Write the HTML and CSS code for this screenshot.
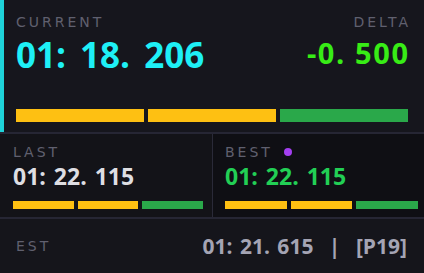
FILE: index.html
```html
<!DOCTYPE html>
<html lang="en">
<head>
  <meta charset="UTF-8">
  <title>Lap Timer</title>
  <link rel="stylesheet" href="styles.css">
</head>
<body>
  <div class="hud">
    <div class="current">
      <div class="head">
        <div class="stat">
          <div class="label">CURRENT</div>
          <div class="time cur">01: 18. 206</div>
        </div>
        <div class="stat right">
          <div class="label">DELTA</div>
          <div class="delta">-0. 500</div>
        </div>
      </div>
      <div class="bar big">
        <span class="seg y"></span><span class="seg y"></span><span class="seg g"></span>
      </div>
    </div>
    <div class="split">
      <div class="cell last">
        <div class="label">LAST</div>
        <div class="time small">01: 22. 115</div>
        <div class="bar">
          <span class="seg y"></span><span class="seg y"></span><span class="seg g"></span>
        </div>
      </div>
      <div class="cell best">
        <div class="label">BEST <span class="dot"></span></div>
        <div class="time small green">01: 22. 115</div>
        <div class="bar">
          <span class="seg y"></span><span class="seg y"></span><span class="seg g"></span>
        </div>
      </div>
    </div>
    <div class="est">
      <div class="label">EST</div>
      <div class="est-val">01: 21. 615 <span class="pipe">|</span> [P19]</div>
    </div>
  </div>
</body>
</html>
```

FILE: styles.css
```css
/* base */
body { margin:0; padding:0; background:#121217; font-family:"Open Sans", "Noto Sans", sans-serif; }
.hud { width:424px; height:273px; display:flex; flex-direction:column; background:#121217; }

/* labels */
.label { font-family:"DejaVu Sans", sans-serif; font-size:14px; line-height:16px; letter-spacing:3px; color:#60606f; }
.right .label { margin-right:-3px; }

/* current lap panel */
.current { height:132px; box-sizing:border-box; background:#16161d; border-left:4px solid #1fd3da; padding:14px 16px 10px 12px; display:flex; flex-direction:column; }
.head { display:flex; justify-content:space-between; }
.stat.right { text-align:right; }
.time { font-weight:700; }
.time.cur { font-size:35px; line-height:40px; margin-top:5px; word-spacing:5px; color:#1ef0f6; }
.delta { font-size:29px; line-height:40px; margin-top:3px; font-weight:700; letter-spacing:1.6px; margin-right:-1.6px; color:#38ec16; }

/* sector bars */
.bar { display:flex; gap:4px; height:8px; }
.bar.big { height:13px; margin-top:auto; }
.seg { flex:1; }
.seg.y { background:#fec012; }
.seg.g { background:#2aa84a; }

/* last / best */
.split { display:grid; grid-template-columns:212px 1fr; border-top:2px solid #262634; border-bottom:2px solid #262634; height:87px; box-sizing:border-box; }
.cell { padding:10px 9px 8px 13px; background:#131318; display:flex; flex-direction:column; }
.cell.best { background:#0f0f14; border-left:1px solid #2a2a38; padding:10px 6px 8px 12px; }
.time.small { font-size:23px; line-height:28px; margin-top:2px; word-spacing:2px; color:#dedee2; }
.time.green { color:#22cf55; }
.cell .bar { margin-top:auto; }
.dot { display:inline-block; width:8px; height:8px; border-radius:50%; background:#a33ff0; margin-left:4px; vertical-align:1px; }

/* estimate */
.est { flex:1; display:flex; justify-content:space-between; align-items:center; padding:0 17px 0 16px; background:#15151b; }
.est-val { font-size:21px; font-weight:700; color:#a4a4b4; word-spacing:2px; }
.pipe { margin:0 8px; }
```
